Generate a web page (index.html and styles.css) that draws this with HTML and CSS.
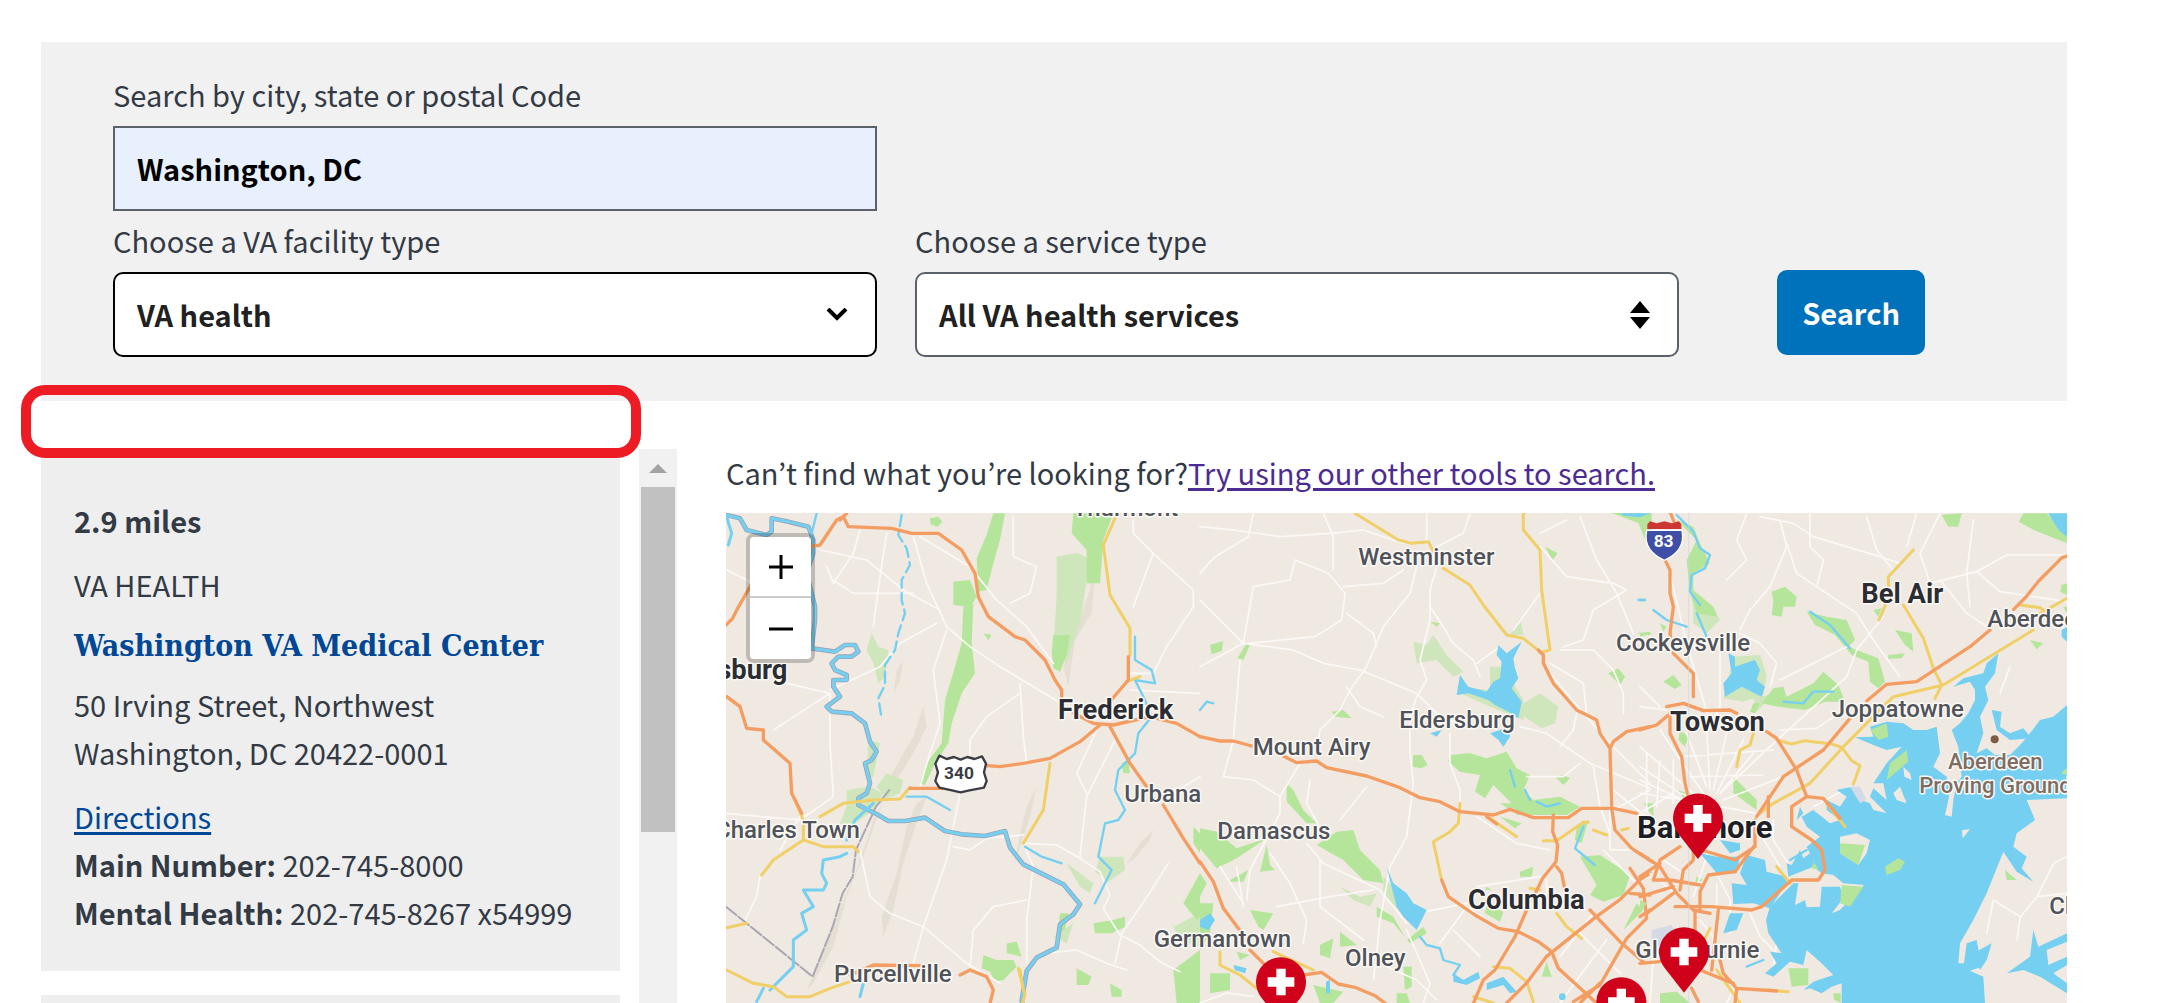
FILE: index.html
```html
<!DOCTYPE html>
<html lang="en">
<head>
<meta charset="utf-8">
<title>Find VA locations</title>
<link rel="stylesheet" href="styles.css">
</head>
<body>
<main class="page">
  <form class="search">
    <div class="field field-location">
      <label for="location">Search by city, state or postal Code</label>
      <input class="control control-text" id="location" type="text" value="Washington, DC">
    </div>
    <div class="field field-first">
      <label for="facility">Choose a VA facility type</label>
      <div class="select-wrap">
        <select class="control control-active" id="facility"><option>VA health</option></select>
        <svg class="select-icon icon-chevron" viewBox="0 0 22 14" aria-hidden="true"><path d="M2 1l9 9 9-9" fill="none" stroke="#000" stroke-width="4"/></svg>
      </div>
    </div>
    <div class="field">
      <label for="service">Choose a service type</label>
      <div class="select-wrap">
        <select class="control" id="service"><option>All VA health services</option></select>
        <svg class="select-icon icon-sort" viewBox="0 0 20 28" aria-hidden="true"><path d="M10 0l10 12H0zM0 16h20L10 28z"/></svg>
      </div>
    </div>
    <button class="search-button" type="submit">Search</button>
  </form>

  <div class="results">
    <section class="sidebar">
      <div class="highlight"></div>
      <div class="cards">
        <article class="card">
          <p class="distance"><strong>2.9 miles</strong></p>
          <p class="kind">VA HEALTH</p>
          <h2 class="facility-name"><a href="#">Washington VA Medical Center</a></h2>
          <p>50 Irving Street, Northwest<br>Washington, DC 20422-0001</p>
          <p class="contact"><a class="directions" href="#">Directions</a><br><strong>Main Number:</strong> 202-745-8000<br><strong>Mental Health:</strong> 202-745-8267 x54999</p>
        </article>
        <article class="card"></article>
      </div>
      <div class="scrollbar" aria-hidden="true">
        <svg class="scroll-arrow" viewBox="0 0 18 9"><path d="M9 0l9 9H0z" fill="#a3a3a3"/></svg>
        <div class="thumb"></div>
      </div>
    </section>

    <section class="map-column">
      <p class="hint">Can’t find what you’re looking for?<a class="visited" href="#">Try using our other tools to search.</a></p>
      <div class="map">
        <svg class="map-art" viewBox="0 0 4023 1470" preserveAspectRatio="xMinYMin slice" role="img" aria-label="Map of Maryland">
          <defs>
            <symbol id="pin" viewBox="-75 -75 150 197" overflow="visible">
              <path d="M0 122L-58 48A75 75 0 1 1 58 48Z" fill="#d0021b"/>
              <path d="M-14-40h28v26h26v28H14v26h-28V14h-26v-28h26z" fill="#fff"/>
            </symbol>
          </defs>

          <!-- West: Charles Town, Frederick -->
          <g transform="translate(-18 -39)">
            <g class="hill">
              <path d="M610 620l10 60-40 80-50 80-20 30-10-20 50-90 30-50z"/>
              <path d="M620 890l-30 80-40 120-30 140-30 80-5-60 45-130 30-140 30-70z"/>
              <path d="M490 900l-60 170-50 120-40 150-60 110-20 20 40-90 50-130 60-140 50-150z"/>
              <path d="M1130 160l-20 110-40 110-40 120 15 60 20-140 50-80z"/>
              <path d="M950 860l-20 90-50 150 25-120 15-60z"/>
              <path d="M1300 990l-10 30-50 60-20 10 40-60z"/>
              <path d="M550 480l-10 60-20 40 10-70z"/>
            </g>
            <g class="wood-light">
              <path d="M1010 170l60-12 40 20-30 190-40 120-40-40 10-160z"/>
              <path d="M455 400l20 40 30 10-10 80-20 20-15-60-20-40z"/>
              <path d="M380 870l70-10 40 20-30 50-80 60-20-20 20-50z"/>
              <path d="M470 860l30-40 50 20-10 40-40 15zM445 720l35 10-20 100-20 10z"/>
              <path d="M1140 1070l70 0 5 40-50 35-40-30zM1040 1090l80 60-10 30-30-20z"/>
              <path d="M1000 1310l60-40-20 60z"/>
              <path d="M1360 1280l80-40 0 100-60-20z"/>
            </g>
            <g class="wood">
              <path d="M820 40l35 0-15 80-20 70-20 80-25 5-5-100 30-70z"/>
              <path d="M1060 40l120 0-30 80-10 130-40 0 0-100-45-50z"/>
              <path d="M700 245l50-5 20 50-20 30-50-5z"/>
              <path d="M730 320l30-10-5 120 10 90-40 60-30 90-10 60-40 60-30 65-15-5 20-60 45-60 10-130 30-100 20-70z"/>
              <path d="M1000 405l50 0-10 60-20 50-20-10-5-50z"/>
              <path d="M630 55l25-5 12 15-15 16-20-8zM790 400l25 5-10 15z"/>
              <path d="M790 1365l40 15 50 0 10 20-40 40-25 5-15-30-25-10zM860 1330l30-5 15 45-45-10z"/>
              <path d="M1120 1270l60-10 35-10 0 30-40 20-50 0zM1020 1240l25 0-10 50-20 5z"/>
              <path d="M1070 1405l45 25-10 25-35 0zM1170 1450l35 20 0 20-30 0z"/>
              <path d="M1440 1120l-50 90 40 50 10-10zM1440 1350l-80 60 10 100 70 0zM1420 980l20 20v60l-20-30z"/>
              <path d="M1205 790l20-10 5 40-20 0z"/>
            </g>
            <g class="street">
              <path d="M580 110l40 140 60 130 70 60 90 60 100 60 100 60"/>
              <path d="M600 110l150 90 80 100 90 80 80 110"/>
              <path d="M680 390l-40 120 20 160-30 90-30 100"/>
              <path d="M300 150l140 30 110 90 110 60"/>
              <path d="M500 100l-20 130-20 150M320 200l20 50 60-90 20-70"/>
              <path d="M340 240l60 40 180 0"/>
              <path d="M200 550l130 30 0 150 10 160-100 70M330 580l-170 110"/>
              <path d="M330 570l150-70 60-70 110-60"/>
              <path d="M240 950l-60 100M20 940l220 20 130 40"/>
              <path d="M420 1050l30 140 60 50 100 40 130 110 100 60"/>
              <path d="M720 880l-40 200-70 200-30 110"/>
              <path d="M910 1030l30 70-20 160 0 130"/>
              <path d="M910 1030l100 5 70 40 60 40 30 70-20 40 50 80 60 30 60 50 60 30"/>
              <path d="M1080 1070l20-180 90-180M1100 880l-30-60 60-130"/>
              <path d="M880 50l0 120 70 30-20 80-60 30"/>
              <path d="M1240 60l0 40 70 70 110 100 0 50-80 120-40 80-70 0"/>
              <path d="M1300 160l-60 160M1230 570l210 10"/>
              <path d="M700 1040l50 10 50-35 110-10M750 1400l10-110 60-70 100-20"/>
              <path d="M120 1130l-10 60-40 80M970 1360l100-10 90 40 60 20"/>
              <path d="M1440 830l-100 60M1345 1090l-70 110-70 100-20 90"/>
              <path d="M900 550l10 160 10 80M900 580l-100 70-50 70 0 80M20 210l120 60"/>
            </g>
            <g class="border">
              <path d="M18 1220l260 210 60-150 30-100 30-50 10-80 60-130 40-50"/>
            </g>
            <g class="river-bank">
              <path d="M20 45l40 10 20 35 60 15 15-10 0-40 50 10 60 15 15 40 0 40-20 60 25 100 0 40-10 85 70 10 30-20 30 0 10 20-20 15-40 0-20 20 10 20 35 15 0 15-40 0 0 20 20 30-40 30 15 15 60 5 40 30 15 55 20 30-15 25-20 10 15 60-10 30-25 15 0 20 60 30 30 18 50 0 60-10 60 40 50 10 70 5 60-15 15 50 40 50 60 30 60 30 50 60-20 30-40 30-10 70-60 30-30 40-15 90 15 45 60 20 20 30"/>
            </g>
            <g class="river">
              <path class="wide" d="M20 45l40 10 20 35 60 15 15-10 0-40 50 10 60 15 15 40 0 40-20 60 25 100 0 40-10 85 70 10 30-20 30 0 10 20-20 15-40 0-20 20 10 20 35 15 0 15-40 0 0 20 20 30-40 30 15 15 60 5 40 30 15 55 20 30-15 25-20 10 15 60-10 30-25 15 0 20 60 30 30 18 50 0 60-10 60 40 50 10 70 5 60-15 15 50 40 50 60 30 60 30 50 60-20 30-40 30-10 70-60 30-30 40-15 90 15 45 60 20 20 30"/>
              <path class="wide" d="M20 50l15 50-10 35"/>
              <path d="M545 45l-10 60 25 40 10 50-25 45 0 60 10 40-20 60-10 50-30 45 0 60-20 40 10 60" stroke-dasharray="34 16"/>
              <path d="M290 40l-15 60M1245 410l0 70 50 30 10 40-60-10 30 60 20 50-40 50-10 60-50 50-10 60 30 60-20 30-40 10-20 100 40 40-20 40-30 60"/>
              <path class="wide" d="M460 910l-55 50-25 60M380 1060l-20 10-50 10-5 40 15 30-10 20-60 0 30 50-35 20 15 50-40 30 0 80-70 70M130 1465l-20 40M430 1450l-10 40"/>
              <path d="M560 890l60 0 70 40M915 1040l50 30 60 20"/>
            </g>
            <g class="yellow">
              <path d="M1185 55l-35 80 20 150 60 100 0 80M1220 545l40-15"/>
              <path d="M990 790l-20 140-60 100M20 590l40 30"/>
              <path d="M300 950l70-40 90-10 80-3 30-35M220 890l30 70 0 60-90 60-35 45M250 1020l60 20 90 0 15 15M20 1283l60-13"/>
              <path d="M20 1410l80 40 60 10 40 30 70 0 60-25 60-20M895 1405l20 80-10 30M900 1410l10 60"/>
            </g>
            <g class="orange">
              <path d="M360 60l20-20M270 140l30-5 50-75 20-10 15 30 130 5 60 15 80 0 70 50 40 70 10 70 30 60 80 60 30 10 60 60 30 60 20 30 0 40M1060 640l60 30 60 5 110-25 80 20 70 40"/>
              <path d="M18 375l20-20 15-30 40-70M20 590l40 30 20 65 50 5 0 30 80 70 5 90 30 60"/>
              <path d="M1225 470l0 70-60 70M1140 675l-60 50-90 50-80 15-70 10-60-5M690 865l-120 0M1170 680l60 110 50 70M1330 915l60 100 50 75"/>
              <path d="M390 1425l70-30 140 2M720 1425l30-15 50 20 20 40-10 40"/>
            </g>
          </g>

          <!-- Centre: Westminster, Columbia -->
          <g transform="translate(1422 -39)">
            <g class="wood-light">
              <path d="M640 425l40 10 20-30 40 60 50 50-30 15-50-50-60 10z"/>
              <path d="M870 500l40 0 60 100 0 60-100-40-90-40-10-20 100 10z"/>
              <path d="M970 610l50-30 55 40-10 50-40 15-60-40zM960 355l10 50-40 0zM550 1130l40 40 60 90-20 10-80-90z"/>
              <path d="M420 1160l60 30 50-10-20 40-50-20z"/>
            </g>
            <g class="wood">
              <path d="M30 435l40-12-5 30-30 10zM140 430l10 5-20 45-18-5zM395 635l35-5 25 25-50-5zM1225 520l30-15 20 25-15 25zM1035 140l38 20-15 20zM690 365l30 5-10 10z"/>
              <path d="M640 765l25 0 18 30-20 10-25-5zM750 765l60-5 50 15 60-20 30 50 40 20-20 45 30 30 80-10 60 30-40 25-150 0-10-30-60-60-25 40-30-20 15-50-60-10-35-30z"/>
              <path d="M260 850l20 20 30 60 40 40-30 0-60-65zM0 985l50 10 60 50 90-30-90 60-60 30-50-60z"/>
              <path d="M350 1035l60-40 50-5 20 60 60 60 10 40-60-10-60-60zM200 1035l10 60 15 15-45 5zM90 1140l55-30-15 35-40 0zM150 1230l70 10-30 50-15-10z"/>
              <path d="M530 1220l50 30 40 70 50-40 10 20-50 30-50-60-50-20zM420 1295l50 40-50 5zM360 1335l40-20-10 60-30-10zM610 1400l25 0 0 60-20 10zM590 1480l30 0 10 29-40 0z"/>
              <path d="M960 1115l40-15-5 30-35 0zM1065 830l25-5 20 10-20 20zM900 950l65 20-20 15zM1130 980l35-20-20 70-20-10zM1140 1070l60-5 90 60-20 60-60 20-40-20 20-30z"/>
              <path d="M860 1215l50 20-10 30-45-25zM1040 1385l15 45-30 0zM0 1210l40 0-10 90-30 50M30 1420l60 0 0 50-60 10zM110 1355l40 10-30 15zM0 1120l20 30-20 40zM340 1455l90 20-30 34-40 0z"/>
              <path d="M1235 39l120 0 0 70-20 10-20-50zM1310 1210l20 20-60 60zM900 910l60 0-30 20z"/>
              <path d="M860 1160l15 10-20 0zM1310 400l40-5v10z"/>
            </g>
            <g class="street">
              <path d="M160 40l-15 70-100 60-45 50M0 300l60 60 70 70-130 70M130 430l150 20 90 40 110 20 170 70 60 60 60 30"/>
              <path d="M650 200l-20 80-80 100-50 120-50 70-30 60-60 60-10 60"/>
              <path d="M710 200l-20 70 0 90-30 120 20 60-30 50-20 60 0 110 10 90-20 160-50 90-30 160-10 100-10 80"/>
              <path d="M680 40l0 90M810 40l-20 60-80 40M0 80l100 10 140 20 150-10 100-10 120 40"/>
              <path d="M130 430l30-170 110-20 15-60 100 40 50 60-10 80-80 50-200 20M400 210l0-100-30-70"/>
              <path d="M440 340l80 60 10 40M430 260l120-10 60-40M120 480l-20 240-30 110 90 10 80 50"/>
              <path d="M300 790l-60 100 0 50-90 170-10 90M210 1060l60 90 50 110-10 70M320 1030l50 60 170 80 80 100"/>
              <path d="M330 840l-10 70 60 110M500 860l-80 100M360 1080l0 140 130 100M230 1220l160-30 130-20"/>
              <path d="M750 700l0 90 30 80 0 50M960 680l80 20 130 90 180 75M690 320l40 60 30 50 60 50 20 50"/>
              <path d="M1050 520l100 120 90 100 110 110M1130 640l-10 50-40 50M1080 450l100 0 60 60 30 70 0 60"/>
              <path d="M1050 490l100 60 10 90M1180 800l20 120 30 80M1020 280l-80 110M1140 50l50 130 60 100 50 120"/>
              <path d="M1020 100l80-40M1020 140l80 90 140 20 40 20-100 60-30 90-60 20M830 490l70-50"/>
              <path d="M830 950l120 80 100 20M830 1160l190-30M720 1330l80-110 90 60M760 1290l80 80M650 1240l150-30"/>
              <path d="M560 1400l90 40 60 60M620 1290l70 160-20 60M1080 1509l140-190M1140 1300l120 120M1180 1240l-100 130"/>
              <path d="M1240 870l110 90M1240 930l110-60M1210 1050l100 100M1230 870l0 180 80 0M60 1100l70 110M110 1100l20 120M980 830l110 0 50-40"/>
              <path d="M0 1509l80-30 80 10M440 560l40 60 70 30M1040 1140l0 60M940 1330l-60 90"/>
            </g>
            <g class="water">
              <path d="M895 435l25 25 45-35-25 50 5 30 10 30-20 30 30 40-10 50-30-20-40-20-20-15-60-20-35 5 10-60 25 35 55 15 20-30 20-10 5-50-15-20zM870 700l60-20 0 30-20 30-15-20zM690 700l35-10-15 20z"/>
              <path d="M560 1100l20 50 40 30 20 30 40 20-20 40-10 20-40-40-20-30z"/>
              <path d="M760 1420l30 20 45-25 5 20-40 20-40-10zM860 1450l50-20 40 45-20 5-20-25-50 15zM0 1260l30-20 15 20-20 30-25-10zM100 1395l40 10-5 15-30-10z"/>
              <path d="M1260 40l90 0-30 12-50-5zM1077 1490a10 10 0 1 0 20 0a10 10 0 1 0-20 0M378 1445l12-5 0 40-12 0z"/>
            </g>
            <g class="river">
              <path d="M0 630l20-25 20 5M930 810l15 50M975 870l15 30M1010 905l30 15 40-10M1150 980l-25 65 60 50M660 1310l20 25 40 10 10 35 50 15-20 30M1315 300l20 0"/>
            </g>
            <g class="yellow">
              <path d="M465 40l130 80 40 10 50-5 15 30M730 205l80 50 40 60 70 90 50 10 50 40M970 40l0 50 50 60 5 120 25 180-30 8"/>
              <path d="M780 910l-5 60-25 25-50 30 25 115M870 955l80 55M1030 1022l40 0 80-55 15 0M1180 990l40 15M1265 990l20-5"/>
              <path d="M1070 1240l30 40 45 35M60 1355l0 40 60 30 50 40M220 1355l120 55M880 1400l50 5 50 40 20 60M820 1490l60 19M990 1165l30 5"/>
            </g>
            <g class="orange">
              <path d="M0 710l60 13 40 0 55 15M250 768l40 20 60-5 30 20 120 25 100 35 60 30 60 12 60 30 100 10 50-17 70 25 105 0 40-28 95 0 70 15"/>
              <path d="M1015 450l15 15 0 25 30 60 70 80 60 30 10 40 30 45 5 180 10 65 50 55 60 40M1230 745l10-20 40-30 70-15M860 950l30 22"/>
              <path d="M725 1140l20 50 80 55 70 40 60 10 60 30 40 30 20 50 110 100M1060 945l-2 50 15 40-5 50-40 50-20 40M980 1230l-35 80-60 100-35 30-30 70M1070 1100l15 20 10 50"/>
              <path d="M1170 1230l90 95 70 60M920 1509l60-60 60-80 150-120 70-50 60-60 30-20M1290 1105l40 60 10 90-60 60-80 140-80 50M1140 1509l60-60M1290 1180l60 5"/>
              <path d="M0 1085l40 60 30 80 60 80M150 1350l50 50M310 1425l55-8 50 35 50 10 60 25 40 30"/>
            </g>
          </g>

          <!-- East: Baltimore, Chesapeake Bay -->
          <g transform="translate(2742 -39)">
            <g class="wood-light">
              <path d="M280 470l80-5 20 60-10 60-60 20-60-10z"/>
              <path d="M160 290l60 30 20 40-40 40-40-30z"/>
              <path d="M340 590l60-5-50 50z"/>
            </g>
            <g class="wood">
              <path d="M110 60l50 20 20 50 30 60-50 30 0 50 60 50 10 30-60-10-20-60-10-100 30-60z"/>
              <path d="M395 275l40-15 35 30-5 30-35 0-5 30-30-5 5-40zM500 335l60 15 60 10 25 60-20 20 50 20 40 15 20 70-20 20-25-20-5-60-50-20-50-60-60-30z"/>
              <path d="M765 390l50 10 5 55-25-20zM745 465l50-5-10 15-40 2zM400 565l30-5 10 30 80-40 30-35 45 40 20 50-60 0-60 25-80-10-50-10z"/>
              <path d="M905 45l60-5-10 40-30 0zM1150 40l70 0 60 60 1 30-100-40-45-25zM1265 255l16-5 0 35-20-10zM1170 420l40 10-20 18zM1281 320l-12 0 12 20z"/>
              <path d="M70 545l30-20 25 30-20 12zM120 690l25 20-10 30-20-20zM60 370l20 10-10 15zM0 400l40 0-40 10zM340 610l20 0-15 30-15-5zM700 330l25-5-10 25zM115 870l25 10-10 15zM280 830l70 70 0 30-70-50zM10 910l30 0 0 40z"/>
              <path d="M170 1130l20 10-25 10zM0 1200l20 10-20 30zM60 1480l50-5 40 34-90 0zM445 1405l60 0 0 50-50 5z"/>
            </g>
            <path class="zone" d="M35 1290l60-15 20 50-80 20z"/>
            <g class="street">
              <path d="M80 180l60 250 70 240M320 40l-30 80 30 60-60 60M420 60l20 80-50 120-60 70-30 60"/>
              <path d="M360 50l100 20 60 40 200 60 60 20M440 130l30 90 180 120 50 80 80 110M510 40l0 100 40 40-20 80"/>
              <path d="M680 50l30 100 50 60M830 40l-30 100M900 40l-60 120 30 90 140-35 90-50 180 0M1000 60l-20 160 10 100"/>
              <path d="M1010 215l70 60 200 30M900 240l80 100 60 40M730 350l-80 100-30 80-120 110-110 100"/>
              <path d="M300 400l60 30 50 60-20 70M420 540l120-60 80-40M240 460l0 160-40 80"/>
              <path d="M420 690l110-5 60-40M1110 500l-30 80M0 560l60 60M0 620l80 10"/>
              <path d="M0 800l120 80 70 20M0 740l160 140M60 690l130 190M140 700l60 160M200 690l10 180M260 700l-40 170M310 720l-80 160M390 740l-150 140M0 840l130 60M0 880l140 20M20 760l0 180M60 780l-10 140M100 780l0 130M0 940l100-60M130 770l270-20M150 830l220-5M250 900l180-70M240 880l100-120M240 920l110 20M30 1010l90-60"/>
              <path d="M190 1040l80 160 0 100M70 1080l60 40M360 1000l60 100M450 1100l-50-80 0-60M520 920l110-60M200 1070l-40 120M30 1120l140 110M230 1150l0 80M330 1240l30 70 60 60M410 1330l-10 70M180 1260l40 50 0 60M40 1370l-10 139"/>
              <path d="M280 1470l-20 39"/>
            </g>
            <g class="water">
              <path d="M605 1509L605 1450 575 1460 545 1480 510 1465 490 1470 520 1445 580 1425 540 1385 500 1350 490 1395 450 1385 400 1430 375 1420 410 1390 390 1355 425 1360 385 1300 378 1260 390 1220 460 1150 475 1150 465 1215 495 1200 500 1222 540 1220 545 1160 600 1160 610 1195 575 1240 600 1230 672 1155 610 1150 580 1125 545 1120 520 1100 445 1130 440 1090 455 1095 480 1050 490 1075 510 1060 500 1040 540 1010 500 980 485 950 520 930 570 970 600 960 560 930 560 900 600 920 620 890 590 870 635 860 660 900 690 910 700 930 740 940 690 890 700 865 740 900 730 850 700 850 740 790 785 740 740 750 700 735 645 712 700 710 690 680 740 665 790 670 820 690 860 690 890 680 900 760 880 800 920 830 930 870 925 900 915 945 935 950 940 900 950 850 965 830 955 740 935 690 960 670 985 640 1005 600 1005 570 990 545 940 560 970 535 1030 520 1040 490 1075 460 1065 520 1035 560 1045 600 1020 650 1030 700 1010 760 1040 745 1065 765 1110 765 1145 730 1170 700 1200 660 1240 650 1281 615 1281 895 1160 900 1185 960 1130 1000 1120 1040 1160 1070 1145 1105 1180 1145 1130 1115 1090 1055 1040 1180 1000 1260 960 1330 955 1390 972 1390 980 1330 1010 1320 1025 1400 990 1412 1030 1430 1035 1509Z"/>
              <path d="M265 460l20 10 0 30 60-20 15 30-10 30 25 20-10 30-60-30-50 30-5-40 25-30z"/>
              <path d="M1225 40l56 0 0 70-25-20zM1265 390l16-10 0 45-16-15z"/>
              <path d="M180 1060l50 10 70 0-10 50-60 0-20-25zM320 1065L375 1080 380 1115 440 1130 440 1150 390 1225 340 1210 280 1212 275 1150 320 1155 300 1120zM240 1020l60 10 0 20-30 10z"/>
              <path d="M270 1240l40 0-20 50-40 10zM480 920l10 20-20 20zM120 690l20 20z"/>
              <path d="M1055 630L1085 635 1080 680 1110 700 1150 685 1175 715 1110 720 1070 690z"/>
              <path d="M1180 1290L1195 1340 1281 1300 1281 1325 1220 1350 1225 1395 1281 1370 1281 1395 1240 1420 1281 1450 1281 1480 1200 1430 1150 1410 1100 1420 1170 1370zM1000 1360L1055 1330 1040 1380 1020 1410z"/>
            </g>
            <g class="land">
              <path d="M600 1010L650 1000 690 1020 680 1060 655 1095 600 1060zM966 990l24-2-22 27zM790 800l20 20 5 20-22-10zM760 880l20-20 20 50-30-10z"/>
            </g>
            <g class="street">
              <path d="M1281 1180l-90 10-50 60-10 70M1060 1200l80 50M1060 1200l-20 100M1281 1070l-40 20-50 100"/>
            </g>
            <g class="wood">
              <path d="M600 1030l75 5-20 60-55-35zM735 1100l40-25 20 10-15 25-40 15zM605 1155l65 5-40 60-30-10zM690 690l50-20 5 40-30 10zM750 790l50-40 5 35-65 55zM520 1080l15 30-20-5zM1095 1110l35 30-30 0zM560 1140l30 15M580 1480l22 0 0 29-20-10zM1281 805l-18 15 18 5z"/>
            </g>
            <path class="zone" d="M630 860l30 0 20 40-20 10z"/>
            <g class="river">
              <path d="M110 45l50 50 20 50 30 20-15 40-40 20-5 50 30 40M0 300l15 0M40 330l40 30 60 20M170 340l30 70M430 605l60 5 30-35 60 0M510 335l60 40 60 70M120 1330l40 0M320 1400l50-20"/>
              <path d="M450 1080l50-30M460 1110l60-20"/>
            </g>
            <g class="yellow">
              <path d="M820 150l-75 80 2 60-30 70M790 315l60 100 30 90 25 50-20 40M1281 295l-80 45M1140 315l60 8 15 10M1180 390l-270 165-150 35-150 150-100 110-110 60-40 30"/>
              <path d="M410 720l45 12 40-10 80 10 30 10 30 40 25 15-20 55M340 700l-10 35-30 15-10 50M560 910l55 70M410 1100l40 50M210 1285l-20 40M230 1410l70 99M380 1470l65 5"/>
            </g>
            <g class="orange">
              <path d="M92 40l10 25M75 180l15 30 0 70 10 40-10 80 10 60 60 60 0 70M0 690l50-15 35-30M80 620l50-10 60 22 80-2 20 10M380 695l30 20 60 95 30 80 50 5 50 60"/>
              <path d="M90 640l0 60 35 70 10 80 10 40M1281 168l-15 5-70 70-40 50-35 35M1050 390l-60 50-160 105-90 8-60 50M630 655l-80 95-120 80-40 60-40 60"/>
              <path d="M500 890l-45 30 0 60 60 40 30 30 10 60-20 30-80 0-90 80-30 10-120-10-110 0"/>
              <path d="M385 890l0 60M345 960l0 80-60 40-100-30M345 1035l-60 80-80 10-25 50 0 60M160 1050l0 30-30 30-10 60M0 1060l60 40 50 80 50 50 50 10M120 1040l-60 40-20 60 50 0 90 15M0 1130l60-40M0 1190l100-30M20 1240l80-60M165 1230l0 60M0 1250l30-20M235 1230l-20 180M240 1380l10 40 40 45 120 8M180 1410l100 40M290 1470l-5 39M155 1465l20 40M0 1390l60-5"/>
            </g>
            <path class="seam" d="M146 40v1469"/>
            <circle cx="1064" cy="718" r="12" fill="#7d5b43"/>
          </g>

          <!-- Place names -->
          <g class="place">
            <text x="1040" y="10">Thurmont</text>
            <text x="-33" y="975">Charles Town</text>
            <text x="324" y="1408">Purcellville</text>
            <text x="1195" y="867">Urbana</text>
            <text x="1283" y="1303">Germantown</text>
            <text x="1897" y="155">Westminster</text>
            <text x="1580" y="726">Mount Airy</text>
            <text x="2020" y="646">Eldersburg</text>
            <text x="1474" y="977">Damascus</text>
            <text x="1857" y="1360">Olney</text>
            <text x="2670" y="415">Cockeysville</text>
            <text x="3317" y="611">Joppatowne</text>
            <text x="3784" y="343">Aberdeen</text>
            <text x="2728" y="1335">Glen Burnie</text>
            <text x="3970" y="1203">Chestertown</text>
          </g>
          <g class="place site">
            <text x="3666" y="767">Aberdeen</text>
            <text x="3580" y="840">Proving Ground</text>
          </g>
          <g class="place town">
            <text x="-72" y="499">nsburg</text>
            <text x="996" y="618">Frederick</text>
            <text x="2226" y="1188">Columbia</text>
            <text x="2832" y="653">Towson</text>
            <text x="3406" y="271">Bel Air</text>
          </g>
          <g class="place city"><text x="2733" y="976">Baltimore</text></g>

          <!-- Route shields -->
          <path d="M640 728l22 10 22-6 20 8 20-8 22 6 22-8 12 22-6 26 8 26-8 20-44 8-26 6-26-6-38-8-12-20 8-26-8-26z" fill="#fff" stroke="#3b3d45" stroke-width="7" stroke-linejoin="round"/>
          <text class="route" x="654" y="799">340</text>
          <path d="M2762 52h106c10 50-20 74-53 90-33-16-63-40-53-90z" fill="#3f4fa8" stroke="#fff" stroke-width="4"/>
          <path d="M2764 48v-14l8-9 20 6 23-6 23 6 20-6 8 9v14z" fill="#cc3733"/>
          <text class="route route-light" x="2783" y="103">83</text>

          <!-- Facility pins -->
          <use href="#pin" x="2841" y="841" width="150" height="197"/>
          <use href="#pin" x="2799" y="1242" width="150" height="197"/>
          <use href="#pin" x="1590" y="1332" width="150" height="197"/>
          <use href="#pin" x="2611" y="1392" width="150" height="197"/>
        </svg>
        <div class="zoom">
          <button class="zoom-button" type="button" aria-label="Zoom in"><svg viewBox="0 0 24 24"><path d="M0 12h24M12 0v24"/></svg></button>
          <button class="zoom-button" type="button" aria-label="Zoom out"><svg viewBox="0 0 24 24"><path d="M0 12h24"/></svg></button>
        </div>
      </div>
    </section>
  </div>
</main>
</body>
</html>
```
FILE: styles.css
```css
* {
  box-sizing: border-box;
}

body {
  margin: 0;
  background: #fff;
  color: #323a45;
  font: 29px/48px "Noto Sans CJK KR", "Open Sans", sans-serif;
}

p,
h2 {
  margin: 0;
}

a {
  color: #004795;
  text-decoration-thickness: 3px;
  text-underline-offset: 3px;
}

.visited {
  color: #4c2c92;
}

.page {
  display: flex;
  flex-direction: column;
  height: 100vh;
  padding: 42px 102px 0 41px;
  overflow: hidden;
}

/* Search form */
.search {
  display: grid;
  grid-template-columns: 1fr 1fr auto;
  column-gap: 38px;
  align-items: end;
  padding: 28px 142px 44px 72px;
  background: #f1f1f1;
}

.field label {
  display: block;
  padding-bottom: 8px;
}

.field-location {
  grid-column: 1;
}

.field-first {
  grid-column: 1;
}

.field:not(.field-location) label {
  padding-top: 5px;
}

.control {
  display: block;
  width: 100%;
  height: 85px;
  margin: 0;
  padding: 0 22px 2px;
  border: 2px solid #5b616b;
  border-radius: 10px;
  background: #fff;
  color: #212121;
  font: inherit;
  font-weight: 700;
  appearance: none;
}

.control-text {
  border-radius: 0;
  background: #e8f0fe;
  color: #000;
}

.control-active {
  border-color: #000;
}

.select-wrap {
  position: relative;
}

.select-icon {
  position: absolute;
  top: 0;
  bottom: 0;
  margin: auto 0;
  pointer-events: none;
}

.icon-chevron {
  right: 29px;
  width: 22px;
}

.icon-sort {
  right: 29px;
  width: 20px;
}

.search-button {
  height: 85px;
  margin: 0 0 2px 60px;
  padding: 0 25px 2px;
  border: 0;
  border-radius: 10px;
  background: #0071bb;
  color: #fff;
  font: inherit;
  font-weight: 700;
}

/* Results */
.results {
  display: grid;
  flex: 1;
  grid-template-columns: 636fr 1341fr;
  grid-template-rows: minmax(0, 1fr);
  column-gap: 49px;
  min-height: 0;
  padding-top: 48px;
}

.sidebar {
  position: relative;
  display: flex;
  gap: 19px;
  min-width: 0;
}

.highlight {
  position: absolute;
  top: -64px;
  left: -20px;
  right: 36px;
  height: 73px;
  border: 10px solid #ed1c24;
  border-radius: 24px;
}

.cards {
  display: flex;
  flex: 1;
  flex-direction: column;
  gap: 24px;
  overflow: hidden;
}

.card {
  flex: none;
  min-height: 200px;
  padding: 47px 33px 35px;
  background: #eee;
}

.kind,
.contact {
  margin-top: 16px;
}

.facility-name {
  margin: 14px 0 10px;
  font: 700 30px/48px "DejaVu Serif Condensed", "DejaVu Serif", serif;
  white-space: nowrap;
}

.facility-name a {
  text-decoration: none;
}

.scrollbar {
  display: flex;
  flex: none;
  flex-direction: column;
  align-items: center;
  width: 38px;
  padding: 0 2px;
  background: #f1f1f1;
}

.scroll-arrow {
  width: 18px;
  height: 9px;
  margin: 15px 0 14px;
}

.thumb {
  width: 100%;
  height: 345px;
  background: #c1c1c1;
}

/* Map */
.map-column {
  display: flex;
  flex-direction: column;
  min-width: 0;
}

.hint {
  margin-top: -1px;
  padding-bottom: 17px;
}

.map {
  position: relative;
  flex: 1;
  min-height: 0;
  overflow: hidden;
  background: #efe9e1;
}

.map-art {
  display: block;
  width: 100%;
  height: 100%;
}

.map-art .street,
.map-art .border,
.map-art .river-bank,
.map-art .river,
.map-art .yellow,
.map-art .orange,
.map-art .seam {
  fill: none;
  stroke-linecap: round;
  stroke-linejoin: round;
}

.street { stroke: #fbf9f7; stroke-width: 5; }
.border { stroke: #aaa6b4; stroke-width: 6; stroke-dasharray: 40 8; }
.river-bank { stroke: #9aa3b8; stroke-width: 14; }
.river { stroke: #75cff0; stroke-width: 7; }
.river .wide { stroke-width: 9; }
.yellow { stroke: #f0cf68; stroke-width: 9; }
.orange { stroke: #f49d63; stroke-width: 10; }
.seam { stroke: #cfd6da; stroke-width: 2; }
.hill { fill: #e5dfd3; }
.wood { fill: #b5e59b; }
.wood-light { fill: #cfe6bd; }
.water { fill: #75cff0; }
.land { fill: #efe9e1; }
.zone { fill: #d4d9e6; }

.place {
  fill: #50535a;
  stroke: #fbf9f6;
  stroke-width: 9;
  stroke-linejoin: round;
  paint-order: stroke;
  font: 500 72px Roboto, sans-serif;
}

.site { fill: #7d6d63; font-size: 66px; }
.town { fill: #2b2d33; font-size: 82px; font-weight: 700; }
.city { fill: #1d1f24; font-size: 93px; font-weight: 700; }

.route {
  fill: #3b3d45;
  font: 700 52px Roboto, sans-serif;
}

.route-light { fill: #fff; }

.zoom {
  position: absolute;
  top: 20px;
  left: 20px;
  display: flex;
  flex-direction: column;
  border: 4px solid rgba(0, 0, 0, 0.2);
  border-radius: 8px;
  background-clip: padding-box;
}

.zoom-button {
  display: grid;
  place-items: center;
  width: 61px;
  height: 61px;
  padding: 0;
  border: 0;
  border-radius: 0 0 4px 4px;
  background: #fff;
}

.zoom-button:first-child {
  border-bottom: 2px solid #ccc;
  border-radius: 4px 4px 0 0;
}

.zoom-button svg {
  width: 24px;
  stroke: #000;
  stroke-width: 3;
}
```
